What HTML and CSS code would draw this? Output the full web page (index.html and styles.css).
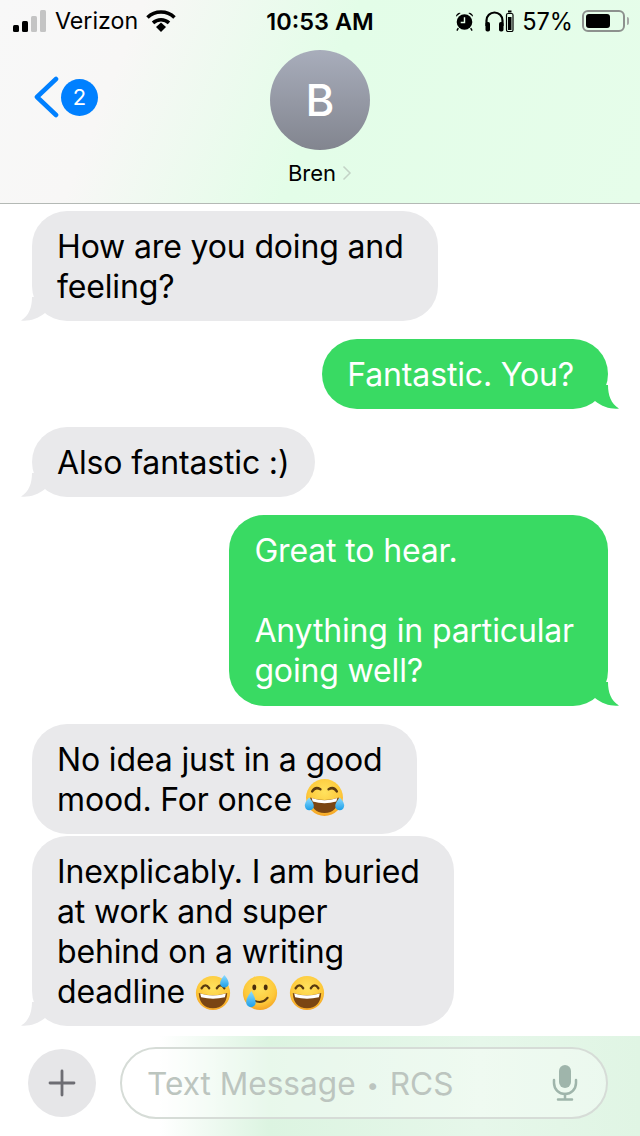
FILE: index.html
```html
<!DOCTYPE html>
<html lang="en">
<head>
    <meta charset="UTF-8">
    <meta name="viewport" content="width=device-width, initial-scale=1.0">
    <title>Messages</title>
    <link rel="stylesheet" href="styles.css">
</head>
<body>
    <svg class="defs" width="0" height="0">
        <defs>
            <radialGradient id="face" cx="50%" cy="35%" r="70%">
                <stop offset="0" stop-color="#ffe25e"/>
                <stop offset="0.65" stop-color="#fdc83a"/>
                <stop offset="1" stop-color="#f39a1e"/>
            </radialGradient>
            <linearGradient id="drop" x1="0" y1="0" x2="0" y2="1">
                <stop offset="0" stop-color="#8fdcff"/>
                <stop offset="1" stop-color="#1c9fe8"/>
            </linearGradient>
        </defs>
    </svg>

    <div class="page">
        <!-- header -->
        <header class="header">
            <div class="status-bar">
                <div class="status-left">
                    <svg class="signal" width="34" height="22" viewBox="0 0 34 22">
                        <rect x="0" y="15" width="6" height="7" rx="1.5" fill="#000"/>
                        <rect x="9" y="11" width="6" height="11" rx="1.5" fill="#000"/>
                        <rect x="18" y="6" width="6" height="16" rx="1.5" fill="#c4c4c4"/>
                        <rect x="27" y="0" width="6" height="22" rx="1.5" fill="#c4c4c4"/>
                    </svg>
                    <span>Verizon</span>
                    <svg class="wifi" width="30" height="22" viewBox="0 0 30 22">
                        <path d="M1.5 7.5a19.5 19.5 0 0 1 27 0" fill="none" stroke="#000" stroke-width="3.6"/>
                        <path d="M7 12.8a12 12 0 0 1 16 0" fill="none" stroke="#000" stroke-width="3.6"/>
                        <path d="M10 17l5-4.4 5 4.4-5 5z" fill="#000"/>
                    </svg>
                </div>
                <div class="status-time">10:53 AM</div>
                <div class="status-right">
                    <svg class="alarm" width="19" height="21" viewBox="0 0 20 21">
                        <circle cx="10" cy="11" r="8.2" fill="#000"/>
                        <path d="M10 6v5.5H6" fill="none" stroke="#e6fde9" stroke-width="1.5"/>
                        <path d="M1 5.5a4 4 0 0 1 5-4zM19 5.5a4 4 0 0 0-5-4z" fill="#000"/>
                        <path d="M3.5 17.5L2 20M16.5 17.5L18 20" stroke="#000" stroke-width="1.5"/>
                    </svg>
                    <svg class="phones" width="29" height="22" viewBox="0 0 29 22">
                        <path d="M1.5 16v-5.500a8 8 0 0 1 16 0V16" fill="none" stroke="#000" stroke-width="2.200"/>
                        <rect x="0.500" y="12" width="4.500" height="9.500" rx="1.800" fill="#000"/>
                        <rect x="14" y="12" width="4.500" height="9.500" rx="1.800" fill="#000"/>
                        <rect x="21.500" y="3.500" width="6.500" height="18" rx="1.5" fill="none" stroke="#000" stroke-width="1.2"/>
                        <rect x="23" y="7" width="3.500" height="13" fill="#000"/>
                        <rect x="23" y="0.500" width="3.500" height="2" fill="#000"/>
                    </svg>
                    <span class="percent">57%</span>
                    <div class="battery"><div class="battery-fill"></div></div>
                    <div class="battery-cap"></div>
                </div>
            </div>
            <div class="nav">
                <div class="back">
                    <svg width="26" height="42" viewBox="0 0 26 42">
                        <path d="M23 3L4 21l19 18" fill="none" stroke="#0080ff" stroke-width="4.600" stroke-linecap="round" stroke-linejoin="round"/>
                    </svg>
                    <span class="badge">2</span>
                </div>
                <div class="contact">
                    <div class="avatar">B</div>
                    <div class="contact-name">Bren
                        <svg width="10" height="16" viewBox="0 0 10 16">
                            <path d="M1.500 1.500L8 8l-6.500 6.500" fill="none" stroke="#c3d3c6" stroke-width="1.500"/>
                        </svg>
                    </div>
                </div>
            </div>
        </header>

        <!-- messages -->
        <main class="messages">
            <div class="bubble in tail">How are you doing and<br>feeling?</div>
            <div class="bubble out tail">Fantastic. You?</div>
            <div class="bubble in tail short">Also fantastic :)</div>
            <div class="bubble out tail tall">Great to hear.<br><br>Anything in particular<br>going well?</div>
            <div class="bubble in">No idea just in a good<br>mood. For once
                <svg class="emoji laugh" viewBox="0 0 40 40">
                    <circle cx="20" cy="20" r="18" fill="url(#face)"/>
                    <path d="M8 14q3-5 8-2M32 14q-3-5-8-2" fill="none" stroke="#5a3a10" stroke-width="2.400" stroke-linecap="round"/>
                    <path d="M6 20q14 5 28 0q-1 15-14 15T6 20z" fill="#7a4513"/>
                    <path d="M7.500 20.500q12.500 4.500 25 0l-1 3.500q-11.500 3-23 0z" fill="#fff"/>
                    <path d="M5 20q-5 5-4 9a4.300 4.300 0 0 0 8.500-1q0-3-4.500-8z" fill="url(#drop)"/>
                    <path d="M35 20q5 5 4 9a4.300 4.300 0 0 1-8.500-1q0-3 4.500-8z" fill="url(#drop)"/>
                </svg>
            </div>
            <div class="bubble in tail next">Inexplicably. I am buried<br>at work and super<br>behind on a writing<br>deadline
                <svg class="emoji" viewBox="0 0 40 40">
                    <circle cx="20" cy="20" r="18" fill="url(#face)"/>
                    <path d="M8 15q4-6 8 0M24 15q4-6 8 0" fill="none" stroke="#5a3a10" stroke-width="2.400" stroke-linecap="round"/>
                    <path d="M5 20q15 5 30 0q-1 16-15 16T5 20z" fill="#7a4513"/>
                    <path d="M6.500 20.500q13.500 4.500 27 0l-1 4q-12.500 3-25 0z" fill="#fff"/>
                    <path d="M32 1q-5 6-4.500 9.500a4.600 4.600 0 0 0 9 0Q37 7 32 1z" fill="url(#drop)"/>
                </svg>
                <svg class="emoji" viewBox="0 0 40 40">
                    <circle cx="20" cy="20" r="18" fill="url(#face)"/>
                    <ellipse cx="14" cy="14" rx="2" ry="3" fill="#4a2e0c"/>
                    <ellipse cx="26" cy="14" rx="2" ry="3" fill="#4a2e0c"/>
                    <path d="M14 28q8 4 14-3" fill="none" stroke="#5a3a10" stroke-width="2.200" stroke-linecap="round"/>
                    <path d="M11 18q-6 8-5.500 12a5 5 0 0 0 10 0q0-4-4.500-12z" fill="url(#drop)"/>
                </svg>
                <svg class="emoji" viewBox="0 0 40 40">
                    <circle cx="20" cy="20" r="18" fill="url(#face)"/>
                    <path d="M8 15q4-6 8 0M24 15q4-6 8 0" fill="none" stroke="#5a3a10" stroke-width="2.400" stroke-linecap="round"/>
                    <path d="M5 20q15 5 30 0q-1 16-15 16T5 20z" fill="#7a4513"/>
                    <path d="M6.500 20.500q13.500 4.500 27 0l-1 4q-12.500 3-25 0z" fill="#fff"/>
                </svg>
            </div>
        </main>

        <!-- input bar -->
        <footer class="composer">
            <div class="plus-btn">
                <svg width="28" height="28" viewBox="0 0 28 28">
                    <path d="M14 2v24M2 14h24" stroke="#6d6d73" stroke-width="2.800" stroke-linecap="round"/>
                </svg>
            </div>
            <div class="input-box">
                <span class="placeholder">Text Message <span class="dot">•</span> RCS</span>
                <svg width="26" height="36" viewBox="0 0 26 36">
                    <rect x="7" y="0" width="12" height="23" rx="6" fill="#9fb5ab"/>
                    <path d="M2 15v3a11 11 0 0 0 22 0v-3" fill="none" stroke="#9fb5ab" stroke-width="2.500" stroke-linecap="round"/>
                    <path d="M13 29v5M6 34.500h14" stroke="#9fb5ab" stroke-width="2.500" stroke-linecap="round"/>
                </svg>
            </div>
        </footer>
    </div>
</body>
</html>
```

FILE: styles.css
```css
body {
    font-family: Inter, "Liberation Sans", sans-serif;
    margin: 0;
    background-color: white;
    color: #000;
}
.defs {
    display: block;
    height: 0;
}
.page {
    width: 640px;
    height: 1136px;
    display: flex;
    flex-direction: column;
    overflow: hidden;
}
/* header */
.header {
    height: 203px;
    border-bottom: 1px solid #b4b9b5;
    background: linear-gradient(112deg, #f8f8f8 0%, #f8f7f6 20%, #e3fde8 50%, #e6fdea 100%);
}
.status-bar {
    height: 40px;
    padding-top: 1px;
    margin-bottom: -1px;
    display: grid;
    grid-template-columns: 1fr auto 1fr;
    align-items: center;
    font-size: 23.200px;
}
.status-left {
    display: flex;
    align-items: center;
    gap: 8px;
    padding-left: 13px;
}
.status-time {
    font-weight: 600;
    font-size: 23.500px;
}
.status-right {
    display: flex;
    align-items: center;
    justify-content: flex-end;
    padding-right: 11px;
}
.alarm {
    margin-right: 11px;
}
.phones {
    margin-right: 8px;
}
.percent {
    font-size: 23.600px;
    margin-right: 9px;
}
.battery {
    width: 43px;
    height: 22px;
    box-sizing: border-box;
    border: 2px solid #8d918e;
    border-radius: 6px;
    padding: 2px;
}
.battery-fill {
    width: 24px;
    height: 14px;
    background-color: #000;
    border-radius: 3px;
}
.battery-cap {
    width: 2px;
    height: 8px;
    margin-left: 2px;
    background-color: #a5a9a6;
    border-radius: 0 2px 2px 0;
}
.nav {
    display: grid;
    grid-template-columns: 1fr auto 1fr;
    padding-top: 10px;
}
.back {
    display: flex;
    align-items: center;
    gap: 2px;
    padding: 26px 0 0 33px;
    align-self: start;
}
.badge {
    width: 37px;
    height: 37px;
    border-radius: 50%;
    background-color: #0080ff;
    color: white;
    font-size: 22px;
    display: flex;
    align-items: center;
    justify-content: center;
}
.contact {
    display: flex;
    flex-direction: column;
    align-items: center;
}
.avatar {
    width: 100px;
    height: 100px;
    border-radius: 50%;
    background: linear-gradient(#a8adbb, #82858f);
    color: white;
    font-size: 44px;
    font-weight: 500;
    display: flex;
    align-items: center;
    justify-content: center;
}
.contact-name {
    margin-top: 10px;
    font-size: 22px;
    line-height: 26px;
    display: flex;
    align-items: center;
    gap: 6px;
}
/* messages */
.messages {
    flex: 1;
    display: flex;
    flex-direction: column;
    align-items: flex-start;
    gap: 18px;
    padding: 7px 32px 0;
}
.bubble {
    position: relative;
    padding: 16px 34px 14px 25px;
    border-radius: 35px;
    font-size: 32px;
    line-height: 40px;
    letter-spacing: -0.15px;
    white-space: nowrap;
}
.in {
    background-color: #e9e9eb;
}
.out {
    background-color: #39da63;
    color: white;
    align-self: flex-end;
}
.short {
    padding-right: 26px;
}
.tall {
    padding-bottom: 15px;
}
.next {
    margin-top: -16px;
}
.tail::after {
    content: "";
    position: absolute;
    bottom: 0;
    width: 24px;
    height: 24px;
    background-color: inherit;
}
.in.tail::after {
    left: -11px;
    clip-path: path("M11 0C11 10 8 19 0 23.500C7 24.500 17 22 24 16L24 0Z");
}
.out.tail::after {
    right: -11px;
    clip-path: path("M13 0C13 10 16 19 24 23.500C17 24.500 7 22 0 16L0 0Z");
}
.emoji {
    width: 38px;
    height: 38px;
    margin: -4px 0;
    vertical-align: -5px;
}
.laugh {
    width: 41px;
    height: 41px;
    margin-left: 3px;
    vertical-align: -3px;
}
/* input bar */
.composer {
    height: 100px;
    box-sizing: border-box;
    display: flex;
    align-items: center;
    gap: 24px;
    padding: 0 32px 6px 28px;
    background: linear-gradient(90deg, #fff 0%, #fff 25%, #dcf4e1 42%, #e6f7ea 75%, #e0f5e4 100%);
}
.plus-btn {
    width: 68px;
    height: 68px;
    border-radius: 50%;
    background-color: #e6e6e8;
    display: flex;
    align-items: center;
    justify-content: center;
}
.input-box {
    flex: 1;
    height: 72px;
    box-sizing: border-box;
    border: 2px solid #d6dcd7;
    border-radius: 36px;
    background-color: rgba(255,255,255,0.35);
    display: flex;
    align-items: center;
    justify-content: space-between;
    padding: 0 28px 0 25px;
}
.placeholder {
    font-size: 31.600px;
    color: #bcc5bf;
}
.dot {
    font-size: 22px;
    padding: 0 2px;
    vertical-align: 2px;
}
```
